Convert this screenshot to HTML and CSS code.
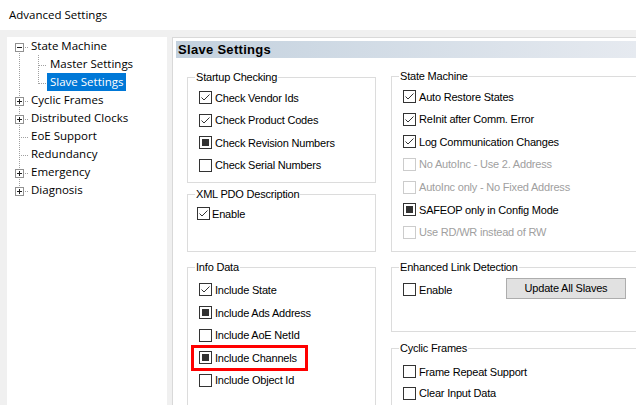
FILE: index.html
```html
<!DOCTYPE html>
<html>
<head>
<meta charset="utf-8">
<title>Advanced Settings</title>
<link rel="stylesheet" href="styles.css">
</head>
<body>
<div class="titlebar">Advanced Settings</div>
<div class="main">
  <div class="tree">
    <div class="node">
      <svg class="gutter" width="20" height="18"><path class="dot" d="M11.5 16V18M17 10.5H20"/><rect class="box" x="7.5" y="6.5" width="8" height="8"/><path class="sign" d="M9 10.5h5"/></svg>
      <span class="label">State Machine</span>
    </div>
    <div class="node">
      <svg class="gutter" width="39" height="18"><path class="dot" d="M11.5 0V18M30.5 0V18M31 10.5H39"/></svg>
      <span class="label">Master Settings</span>
    </div>
    <div class="node">
      <svg class="gutter" width="39" height="18"><path class="dot" d="M11.5 0V18M30.5 0V11M31 10.5H39"/></svg>
      <span class="label selected">Slave Settings</span>
    </div>
    <div class="node">
      <svg class="gutter" width="20" height="18"><path class="dot" d="M11.5 0V18M17 10.5H20"/><rect class="box" x="7.5" y="6.5" width="8" height="8"/><path class="sign" d="M9 10.5h5M11.5 8v5"/></svg>
      <span class="label">Cyclic Frames</span>
    </div>
    <div class="node">
      <svg class="gutter" width="20" height="18"><path class="dot" d="M11.5 0V18M17 10.5H20"/><rect class="box" x="7.5" y="6.5" width="8" height="8"/><path class="sign" d="M9 10.5h5M11.5 8v5"/></svg>
      <span class="label">Distributed Clocks</span>
    </div>
    <div class="node">
      <svg class="gutter" width="20" height="18"><path class="dot" d="M11.5 0V18M13 10.5H20"/></svg>
      <span class="label">EoE Support</span>
    </div>
    <div class="node">
      <svg class="gutter" width="20" height="18"><path class="dot" d="M11.5 0V18M13 10.5H20"/></svg>
      <span class="label">Redundancy</span>
    </div>
    <div class="node">
      <svg class="gutter" width="20" height="18"><path class="dot" d="M11.5 0V18M17 10.5H20"/><rect class="box" x="7.5" y="6.5" width="8" height="8"/><path class="sign" d="M9 10.5h5M11.5 8v5"/></svg>
      <span class="label">Emergency</span>
    </div>
    <div class="node">
      <svg class="gutter" width="20" height="18"><path class="dot" d="M11.5 0V6M17 10.5H20"/><rect class="box" x="7.5" y="6.5" width="8" height="8"/><path class="sign" d="M9 10.5h5M11.5 8v5"/></svg>
      <span class="label">Diagnosis</span>
    </div>
  </div>

  <div class="pane">
    <div class="pane-header">Slave Settings</div>
    <div class="pane-body">
      <div class="col col-left">
        <div class="group g-startup">
          <span class="group-title">Startup Checking</span>
          <div class="row"><span class="cb"><svg viewBox="0 0 11 11"><path d="M1.5 5.5 4 8l5.5-5.5"/></svg></span><span>Check Vendor Ids</span></div>
          <div class="row"><span class="cb"><svg viewBox="0 0 11 11"><path d="M1.5 5.5 4 8l5.5-5.5"/></svg></span><span>Check Product Codes</span></div>
          <div class="row"><span class="cb mixed"></span><span>Check Revision Numbers</span></div>
          <div class="row"><span class="cb"></span><span>Check Serial Numbers</span></div>
        </div>
        <div class="group g-xml">
          <span class="group-title">XML PDO Description</span>
          <div class="row"><span class="cb"><svg viewBox="0 0 11 11"><path d="M1.5 5.5 4 8l5.5-5.5"/></svg></span><span>Enable</span></div>
        </div>
        <div class="group g-info">
          <span class="group-title">Info Data</span>
          <div class="row"><span class="cb"><svg viewBox="0 0 11 11"><path d="M1.5 5.5 4 8l5.5-5.5"/></svg></span><span>Include State</span></div>
          <div class="row"><span class="cb mixed"></span><span>Include Ads Address</span></div>
          <div class="row"><span class="cb"></span><span>Include AoE NetId</span></div>
          <div class="row hl-row"><span class="cb mixed"></span><span>Include Channels</span><span class="highlight"></span></div>
          <div class="row"><span class="cb"></span><span>Include Object Id</span></div>
        </div>
      </div>

      <div class="col col-right">
        <div class="group g-state">
          <span class="group-title">State Machine</span>
          <div class="row"><span class="cb"><svg viewBox="0 0 11 11"><path d="M1.5 5.5 4 8l5.5-5.5"/></svg></span><span>Auto Restore States</span></div>
          <div class="row"><span class="cb"><svg viewBox="0 0 11 11"><path d="M1.5 5.5 4 8l5.5-5.5"/></svg></span><span>ReInit after Comm. Error</span></div>
          <div class="row"><span class="cb"><svg viewBox="0 0 11 11"><path d="M1.5 5.5 4 8l5.5-5.5"/></svg></span><span>Log Communication Changes</span></div>
          <div class="row off"><span class="cb"></span><span>No AutoInc - Use 2. Address</span></div>
          <div class="row off"><span class="cb"></span><span>AutoInc only - No Fixed Address</span></div>
          <div class="row"><span class="cb mixed"></span><span>SAFEOP only in Config Mode</span></div>
          <div class="row off"><span class="cb"></span><span>Use RD/WR instead of RW</span></div>
        </div>
        <div class="group g-link">
          <span class="group-title">Enhanced Link Detection</span>
          <div class="row">
            <span class="check-label"><span class="cb"></span><span>Enable</span></span>
            <button class="btn" type="button">Update All Slaves</button>
          </div>
        </div>
        <div class="group g-cyclic">
          <span class="group-title">Cyclic Frames</span>
          <div class="row"><span class="cb"></span><span>Frame Repeat Support</span></div>
          <div class="row"><span class="cb"></span><span>Clear Input Data</span></div>
        </div>
      </div>
    </div>
  </div>
</div>
</body>
</html>
```
FILE: styles.css
```css
* { box-sizing: border-box; }
html, body { margin: 0; padding: 0; }
body {
  width: 636px;
  height: 405px;
  overflow: hidden;
  background: #f0f0f0;
  font-family: "Liberation Sans", Arial, sans-serif;
  font-size: 11px;
  color: #000;
}
.titlebar {
  height: 30px;
  background: #fff;
  padding-left: 9px;
  font-family: "Open Sans", sans-serif;
  font-size: 11.5px;
  line-height: 30px;
}
.main {
  display: flex;
  align-items: flex-start;
  padding-top: 7px;
  width: 636px;
  height: 375px;
  overflow: hidden;
}
.tree {
  flex: none;
  margin-left: 7px;
  width: 160px;
  height: 368px;
  padding-left: 1px;
  background: #fff;
  font-family: "Open Sans", sans-serif;
  font-size: 11.5px;
}
.node { display: flex; height: 18px; }
.gutter { flex: none; display: block; }
.dot { fill: none; stroke: #a0a0a0; stroke-width: 1; stroke-dasharray: 1 1; shape-rendering: crispEdges; }
.box { fill: #fff; stroke: #919191; stroke-width: 1; shape-rendering: crispEdges; }
.sign { fill: none; stroke: #1e1e1e; stroke-width: 1; shape-rendering: crispEdges; }
.label { padding: 0 3px; line-height: 18px; white-space: nowrap; }
.label.selected { background: #0078d7; color: #fff; }

.pane {
  flex: 1;
  min-width: 0;
  margin-left: 5px;
  height: 368px;
  overflow: hidden;
  border-top: 1px solid #d9d9d9;
  border-left: 1px solid #d9d9d9;
  background: #fff;
  padding: 3px 0 0 3px;
}
.pane-header {
  height: 17px;
  line-height: 17px;
  padding-left: 2px;
  font-weight: bold;
  font-size: 13px;
  letter-spacing: 0.3px;
  background: linear-gradient(to right, #c3d1de 0, #e6eaf0 100%);
}
.pane-body {
  display: flex;
  align-items: flex-start;
  gap: 15px;
  padding: 18px 0 0 11px;
  letter-spacing: -0.2px;
}
.col { flex: none; }
.col-left { width: 189px; margin-top: 1px; }
.col-right { width: 300px; }

.group {
  position: relative;
  border: 1px solid #dcdcdc;
  padding-left: 11px;
}
.group-title {
  position: absolute;
  top: -7px;
  left: 7px;
  padding: 0 1px;
  background: #fff;
  line-height: 13px;
  white-space: nowrap;
}
.g-startup { height: 106px; padding-top: 8.4px; }
.g-xml { height: 58px; margin-top: 11px; padding-top: 7.4px; padding-left: 9px; }
.g-info { height: 140px; margin-top: 15px; padding-top: 10.7px; }
.g-state { height: 176px; padding-top: 8.4px; }
.g-link { height: 65px; margin-top: 15px; padding-top: 10.7px; }
.g-cyclic { height: 60px; margin-top: 16px; padding-top: 11.85px; }

.row {
  display: flex;
  align-items: center;
  height: 22.6px;
  white-space: nowrap;
}
.g-cyclic .row { height: 21.7px; }
.cb {
  flex: none;
  width: 13px;
  height: 13px;
  border: 1px solid #333;
  background: #fff;
  margin-right: 3px;
  display: flex;
  align-items: center;
  justify-content: center;
}
.g-xml .cb { margin-right: 2px; }
.cb svg { width: 11px; height: 11px; display: block; }
.cb path { fill: none; stroke: #333; stroke-width: 1; }
.cb.mixed::after { content: ""; width: 7px; height: 7px; background: #333; }
.row.off { color: #a0a0a0; }
.row.off .cb { border-color: #cccccc; }

.check-label { display: flex; align-items: center; width: 103px; flex: none; }
.btn {
  flex: none;
  width: 120px;
  height: 21px;
  margin: 0 0 3px 0;
  padding: 0;
  border: 1px solid #adadad;
  background: #e1e1e1;
  font-family: inherit;
  font-size: 11px;
  letter-spacing: -0.2px;
  color: #000;
  line-height: 19px;
  text-align: center;
}

.hl-row { position: relative; }
.highlight {
  position: absolute;
  left: -8px;
  top: -1px;
  width: 117px;
  height: 26px;
  border: 3px solid #ff0000;
}
```
